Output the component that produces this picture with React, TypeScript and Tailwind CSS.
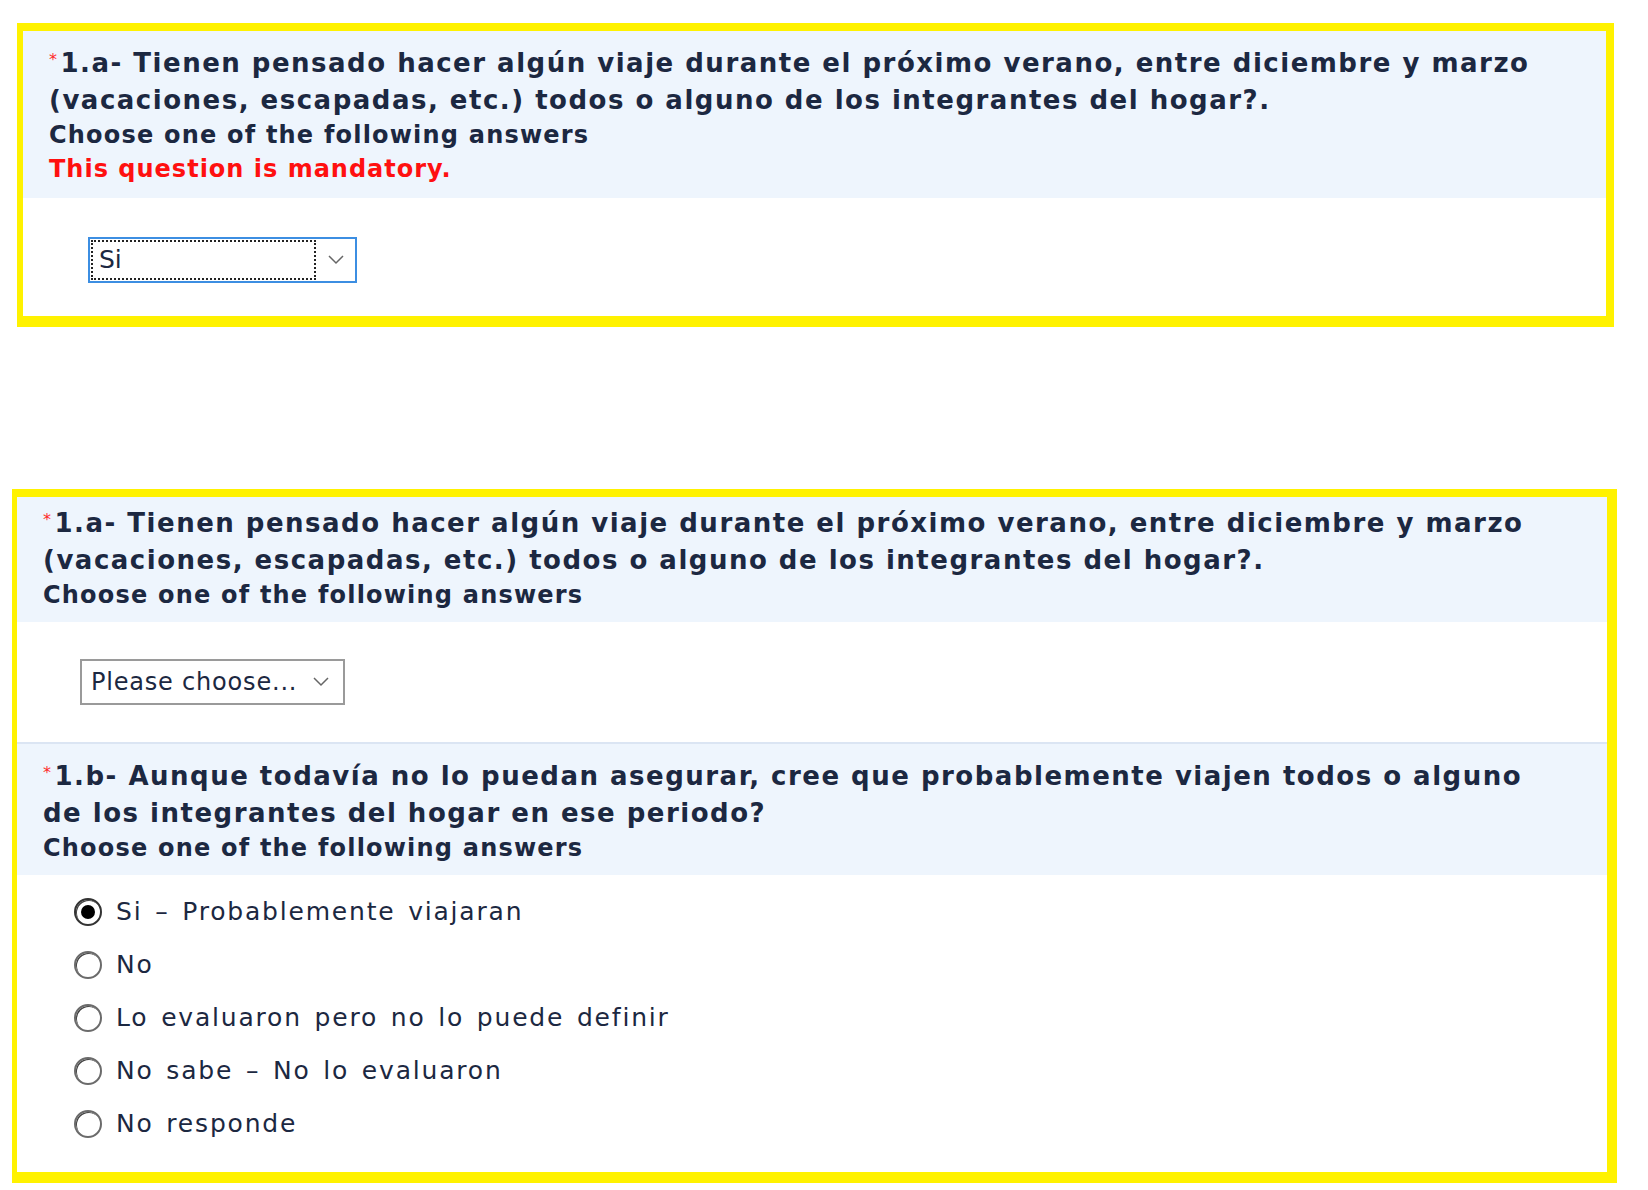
import React from "react";

const ink = "text-[#1c2841]";

function Star() {
  return <span className="relative top-[-7px] text-[#ff2a2a] text-[16px] leading-none font-normal mr-[2px]">*</span>;
}

function Chevron() {
  return (
    <svg width="16" height="10" viewBox="0 0 16 10" fill="none">
      <polyline points="1,1 8,8 15,1" stroke="#666" strokeWidth="1.5" />
    </svg>
  );
}

function QuestionHeader({ lines, mandatory, pt }: { lines: string[]; mandatory?: boolean; pt: string }) {
  return (
    <div className={`bg-[#eef5fd] pl-[26px] ${pt} pb-[11px]`}>
      <div className={`text-[26px] font-bold leading-[37px] tracking-[1.5px] whitespace-nowrap ${ink}`}>
        <Star />
        {lines[0]}
        <br />
        {lines[1]}
      </div>
      <div className={`text-[24px] font-bold leading-[32px] tracking-[1.2px] ${ink} ${mandatory ? "leading-[33px]" : ""}`}>
        Choose one of the following answers
      </div>
      {mandatory && (
        <div className="text-[24px] font-bold leading-[35px] tracking-[1px] text-[#ff1010]">This question is mandatory.</div>
      )}
    </div>
  );
}

function Radio({ checked, label }: { checked?: boolean; label: string }) {
  return (
    <div className="flex items-center h-[53px]">
      <span
        className={`w-[28px] h-[28px] rounded-full border-2 bg-white flex items-center justify-center shadow-[inset_1px_1px_0_#444] ${
          checked ? "border-[#333]" : "border-[#6b6b6b]"
        }`}
      >
        {checked && <span className="w-[14px] h-[14px] rounded-full bg-black" />}
      </span>
      <span className={`ml-[14px] text-[25px] tracking-[1.8px] [word-spacing:3px] ${ink}`}>{label}</span>
    </div>
  );
}

const q1 = [
  "1.a- Tienen pensado hacer algún viaje durante el próximo verano, entre diciembre y marzo",
  "(vacaciones, escapadas, etc.) todos o alguno de los integrantes del hogar?.",
];
const q2 = [
  "1.b- Aunque todavía no lo puedan asegurar, cree que probablemente viajen todos o alguno",
  "de los integrantes del hogar en ese periodo?",
];

export default function App() {
  return (
    <div className="w-[1648px] h-[1190px] bg-white overflow-hidden font-['DejaVu_Sans',Verdana,sans-serif]">
      {/* first capture: validation error */}
      <div className="ml-[17px] mt-[23px] w-[1597px] border-[#fff200] border-l-[6px] border-t-[8px] border-r-[8px] border-b-[11px]">
        <QuestionHeader lines={q1} mandatory pt="pt-[14px]" />
        <div className="bg-white pt-[39px] pb-[33px] pl-[65px]">
          <div className="w-[269px] h-[46px] border-2 border-[#3c8ee2] flex items-stretch bg-white">
            <div className="flex-1 m-[1px] border-2 border-dotted border-[#222] flex items-center pl-[6px]">
              <span className={`text-[25px] ${ink}`}>Si</span>
            </div>
            <div className="w-[38px] flex items-center justify-center">
              <Chevron />
            </div>
          </div>
        </div>
      </div>

      {/* second capture */}
      <div className="ml-[12px] mt-[162px] w-[1605px] border-[#fff200] border-l-[5px] border-t-[8px] border-r-[10px] border-b-[11px]">
        <QuestionHeader lines={q1} pt="pt-[8px]" />
        <div className="bg-white pt-[37px] pb-[37px] pl-[63px] border-b-2 border-[#dbe5f3]">
          <div className="w-[265px] h-[46px] border-2 border-[#9a9a9a] flex items-center bg-white pl-[9px] pr-[14px]">
            <span className={`flex-1 text-[24px] tracking-[0.8px] ${ink}`}>Please choose...</span>
            <Chevron />
          </div>
        </div>
        <QuestionHeader lines={q2} pt="pt-[14px]" />
        <div className="bg-white pt-[10px] pb-[22px] pl-[57px]">
          <Radio checked label="Si – Probablemente viajaran" />
          <Radio label="No" />
          <Radio label="Lo evaluaron pero no lo puede definir" />
          <Radio label="No sabe – No lo evaluaron" />
          <Radio label="No responde" />
        </div>
      </div>
    </div>
  );
}
